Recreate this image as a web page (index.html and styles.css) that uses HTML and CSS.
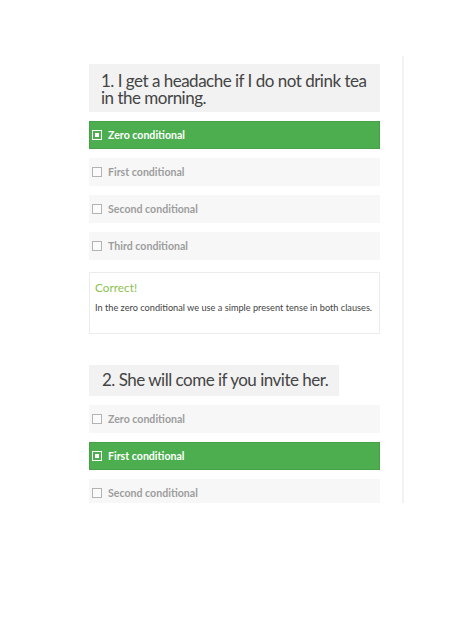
FILE: index.html
```html
<!DOCTYPE html>
<html>
<head>
<meta charset="utf-8">
<link rel="stylesheet" href="styles.css">
</head>
<body>
<div class="frame">
  <div class="quiz">
    <div class="question">
      <h2 class="q-title">1. I get a headache if I do not drink tea in the morning.</h2>
      <ul class="options">
        <li class="option selected"><span class="box"></span>Zero conditional</li>
        <li class="option"><span class="box"></span>First conditional</li>
        <li class="option"><span class="box"></span>Second conditional</li>
        <li class="option"><span class="box"></span>Third conditional</li>
      </ul>
      <div class="feedback">
        <div class="fb-title">Correct!</div>
        <p class="fb-text">In the zero conditional we use a simple present tense in both clauses.</p>
      </div>
    </div>
    <div class="question">
      <h2 class="q-title short">2. She will come if you invite her.</h2>
      <ul class="options">
        <li class="option"><span class="box"></span>Zero conditional</li>
        <li class="option selected"><span class="box"></span>First conditional</li>
        <li class="option"><span class="box"></span>Second conditional</li>
      </ul>
    </div>
  </div>
</div>
</body>
</html>
```
FILE: styles.css
```css
html, body {
  margin: 0;
  padding: 0;
  background: #ffffff;
}
body {
  font-family: Lato, "Open Sans", sans-serif;
  padding: 56px 0 0 89px;
}
.frame {
  height: 447px;
  padding: 8px 22px 0 0;
  box-sizing: border-box;
  width: 315px;
  border-right: 2px solid #f3f3f3;
  overflow: hidden;
}
.quiz {
  display: flex;
  flex-direction: column;
  gap: 31px;
}
.question {
  display: flex;
  flex-direction: column;
  align-items: flex-start;
}
.q-title {
  margin: 0;
  background: #f2f2f2;
  color: #444444;
  font-size: 17px;
  letter-spacing: -0.5px;
  font-weight: 400;
  line-height: 17px;
  padding: 8px 6px 6px 12px;
  box-sizing: border-box;
}
.q-title.short {
  padding: 6px 11px 8px 13px;
}
.options {
  list-style: none;
  margin: 9px 0 0 0;
  padding: 0;
  align-self: stretch;
  display: flex;
  flex-direction: column;
  gap: 9px;
}
.option {
  height: 28px;
  box-sizing: border-box;
  background: #f7f7f7;
  color: #9d9d9d;
  font-size: 10.6px;
  font-weight: 700;
  display: flex;
  align-items: center;
  padding-left: 3px;
}
.option .box {
  width: 10px;
  height: 10px;
  box-sizing: border-box;
  border: 1px solid #b3b3b3;
  background: #fbfbfb;
  margin-right: 6px;
  display: flex;
  align-items: center;
  justify-content: center;
}
.option.selected {
  background: #4cae4f;
  border: 1px solid #45a048;
  padding-left: 2px;
  color: #ffffff;
}
.option.selected .box {
  border-color: #ffffff;
  background: transparent;
}
.option.selected .box::after {
  content: "";
  width: 4px;
  height: 4px;
  background: #ffffff;
}
.feedback {
  align-self: stretch;
  margin-top: 12px;
  border: 1px solid #ececec;
  height: 62px;
  box-sizing: border-box;
  padding: 8px 5px 0 5px;
}
.fb-title {
  color: #8cc152;
  font-size: 11.8px;
  line-height: 14px;
}
.fb-text {
  margin: 7px 0 0 0;
  color: #444444;
  font-size: 9.2px;
  line-height: 11px;
}
```
